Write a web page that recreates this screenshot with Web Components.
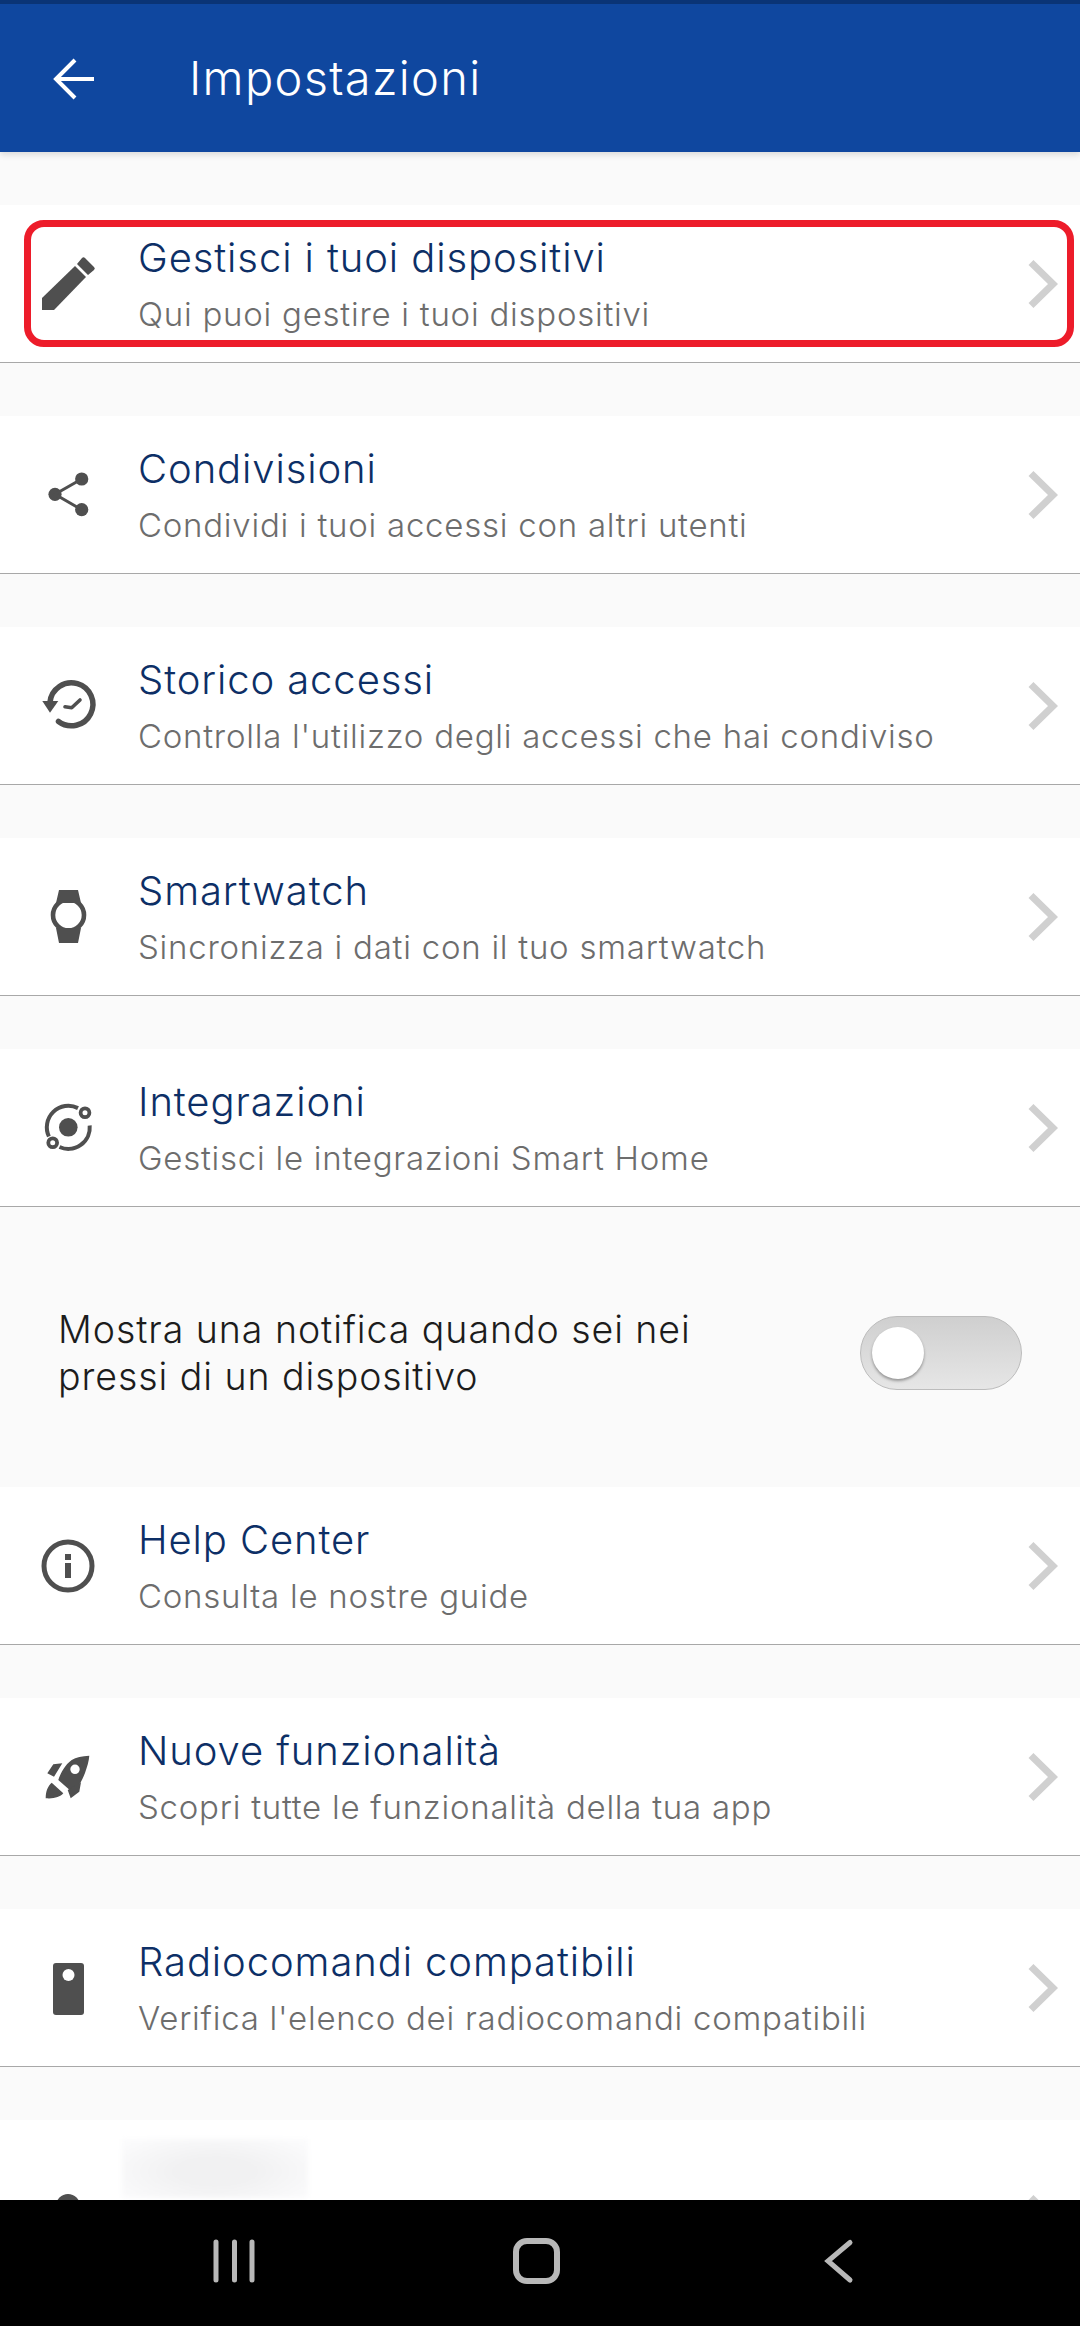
<!DOCTYPE html>
<html><head><meta charset="utf-8"><style>
html,body{margin:0;padding:0;height:100%}
body{font-family:"Inter","Liberation Sans",sans-serif;background:#fafafa}
app-shell{height:2326px}
</style></head><body>
<app-shell>
<app-header slot="top">Impostazioni</app-header>
<set-row t="Gestisci i tuoi dispositivi" s="Qui puoi gestire i tuoi dispositivi" i="edit" mark></set-row>
<set-row t="Condivisioni" s="Condividi i tuoi accessi con altri utenti" i="share"></set-row>
<set-row t="Storico accessi" s="Controlla l'utilizzo degli accessi che hai condiviso" i="history"></set-row>
<set-row t="Smartwatch" s="Sincronizza i dati con il tuo smartwatch" i="watch"></set-row>
<set-row t="Integrazioni" s="Gestisci le integrazioni Smart Home" i="orbit"></set-row>
<toggle-row>Mostra una notifica quando sei nei pressi di un dispositivo</toggle-row>
<set-row t="Help Center" s="Consulta le nostre guide" i="info"></set-row>
<set-row t="Nuove funzionalità" s="Scopri tutte le funzionalità della tua app" i="rocket"></set-row>
<set-row t="Radiocomandi compatibili" s="Verifica l'elenco dei radiocomandi compatibili" i="remote"></set-row>
<set-row blur i="user"></set-row>
<nav-bar slot="bottom"></nav-bar>
</app-shell>
<script>
const S='fill="none" stroke="#4f4f4f"';
const ICONS={
edit:'<path d="M10 50 43 18l11 11-32 33H10z"/><path d="M45 16l5-6a2 2 0 0 1 3 0l9 9a2 2 0 0 1 0 3l-6 5z"/>',
share:`<circle cx="49.7" cy="20" r="6.6"/><circle cx="23" cy="35.3" r="6.6"/><circle cx="49.7" cy="50.7" r="6.6"/><path d="M49.7 20 23 35.3 49.7 50.7" ${S} stroke-width="3"/>`,
history:`<path d="M26.500 51.500A21.500 21.500 0 1 0 18 32" ${S} stroke-width="5.500" stroke-linecap="round"/><path d="M10.300 31H26.300L18 42.700z"/><path d="M33 36.700l6.700 1L48 30" ${S} stroke-width="3.600" stroke-linecap="round" stroke-linejoin="round"/>`,
watch:`<circle cx="36.500" cy="34" r="15.500" ${S} stroke-width="4.600"/><path d="M27 9H46L49 22H24zM24 47H49L46 62H27z"/>`,
orbit:`<circle cx="36.300" cy="35.300" r="9.300"/><path d="M16.900 44.500A21.500 21.500 0 0 1 46 16.100" ${S} stroke-width="4"/><circle cx="53" cy="20.700" r="4.400" ${S} stroke-width="3.800"/><path d="M57.700 33.500A21.500 21.500 0 0 1 27.500 55" ${S} stroke-width="4"/><circle cx="20.700" cy="50.700" r="4.400" ${S} stroke-width="3.800"/>`,
info:`<circle cx="36" cy="36" r="24" ${S} stroke-width="5"/><rect x="33" y="33" width="6" height="15"/><rect x="33" y="24" width="6" height="6"/>`,
rocket:'<path fill-rule="evenodd" d="M57.300 14.700C50 15 44 16.500 39.700 19 33 24 29 31 26.300 39L39.700 50.700C46 47 50 40 53 32 55 26 57 20 57.300 14.700zM47.700 28.300a4.700 4.700 0 1 1-9.400 0 4.700 4.700 0 0 1 9.400 0z"/><path d="M15.300 32.300 21.300 23.300 30.300 22.300 22 35.700zM49 41.300 47.300 50.700 38.700 57.300 35.700 49zM13.700 57.300C13.700 50 16 45 19.700 41.700L31.300 52.300C28 56 22 58 13.700 57.300z"/>',
remote:'<rect x="21" y="11" width="31" height="52" rx="3"/><circle cx="36.500" cy="23" r="6" fill="#fff"/>',
user:'<circle cx="36" cy="23" r="12"/>'
};
class AppShell extends HTMLElement{constructor(){super();this.attachShadow({mode:'open'}).innerHTML=`<style>
:host{display:flex;flex-direction:column;width:1080px;overflow:hidden;background:#fafafa}
.top{flex:none;position:relative;z-index:1}
.body{flex:1;min-height:0;overflow:hidden;display:flex;flex-direction:column;padding-top:53px}
.bot{flex:none}
</style><div class="top"><slot name="top"></slot></div><div class="body"><slot></slot></div><div class="bot"><slot name="bottom"></slot></div>`}}
class AppHeader extends HTMLElement{constructor(){super();this.attachShadow({mode:'open'}).innerHTML=`<style>
:host{display:block;background:#0f479f;border-top:4px solid #0a3476;box-shadow:0 3px 6px rgba(0,0,0,.12)}
.b{height:148px;display:flex;align-items:center;padding-left:53px;box-sizing:border-box;color:#fff}
svg{width:42px;height:42px;flex:none;display:block;margin-top:1px}
.t{margin-left:94px;font:300 47px/1 "Inter",sans-serif;letter-spacing:1.3px;padding-bottom:2px}
</style><div class="b"><svg viewBox="0 0 42 42"><path d="M41 21H3M22 2 3 21l19 19" fill="none" stroke="#fff" stroke-width="4"/></svg><span class="t"><slot></slot></span></div>`}}
class SetRow extends HTMLElement{connectedCallback(){if(this.shadowRoot)return;
const blur=this.hasAttribute('blur');const r=this.attachShadow({mode:'open'});
r.innerHTML=`<style>
:host{display:block;flex:none;position:relative;background:#fff;height:158px;box-sizing:border-box;border-bottom:1.5px solid #a8a8a8;margin-bottom:53px}
:host([blur]){height:198px;border:0;margin:0}
.r{display:flex;height:100%;align-items:center;padding-left:32px;box-sizing:border-box}
.i{width:72px;height:72px;flex:none;fill:#4f4f4f;display:block}
.x{margin-left:34px;flex:1;min-width:0}
.t{font:350 40px/48px "Inter",sans-serif;letter-spacing:.9px;color:#0d2f66}
.s{font:350 33px/40px "Inter",sans-serif;letter-spacing:.75px;color:#6d6d6d;margin-top:12px;white-space:nowrap}
.c{width:34px;height:50px;flex:none;margin-right:19px;display:block}
.m{position:absolute;left:24px;top:15px;border:7px solid #ed1c2a;border-radius:20px;box-sizing:content-box;width:1036px;height:113px}
.b{position:absolute;left:122px;top:19px;width:186px;height:59px;background:radial-gradient(ellipse at 50% 55%,#f1f1f2 30%,#fbfbfc 90%);filter:blur(2px)}
</style><div class="r"><svg class="i" viewBox="0 0 72 72">${ICONS[this.getAttribute('i')]}</svg><div class="x">${blur?'':`<div class="t">${this.getAttribute('t')}</div><div class="s">${this.getAttribute('s')}</div>`}</div><svg class="c" viewBox="0 0 34 50"><path d="M4 3.500 26 25 4 46.500" fill="none" stroke="#d0d0d0" stroke-width="7"/></svg></div>${this.hasAttribute('mark')?'<div class="m"></div>':''}${blur?'<div class="b"></div>':''}`;
}}
class ToggleRow extends HTMLElement{constructor(){super();this.attachShadow({mode:'open'}).innerHTML=`<style>
:host{display:flex;flex:none;height:280px;box-sizing:border-box;align-items:center;justify-content:space-between;padding:12px 58px 0 58px;margin-top:-53px}
.l{width:680px;font:350 37.500px/47px "Inter",sans-serif;letter-spacing:.95px;color:#1c1c1c}
</style><div class="l"><slot></slot></div><app-switch></app-switch>`}}
class AppSwitch extends HTMLElement{constructor(){super();this.attachShadow({mode:'open'}).innerHTML=`<style>
:host{display:block;width:162px;height:74px;box-sizing:border-box;border:1px solid #bcbcbc;border-radius:37px;background:linear-gradient(#cfcfcf,#e6e6e6);padding:10px 11px}
.k{width:52px;height:52px;border-radius:50%;background:#fff;box-shadow:0 2px 3px rgba(0,0,0,.35)}
</style><div class="k"></div>`}}
class NavBar extends HTMLElement{constructor(){super();this.attachShadow({mode:'open'}).innerHTML=`<style>
:host{display:flex;background:#000;height:126px;box-sizing:border-box;padding:30px 0 0 0;align-items:flex-start}
svg{width:1080px;height:60px;display:block}
</style><svg viewBox="0 0 1080 60"><g fill="none" stroke="#b8b8b8" stroke-linecap="round"><path d="M216 12V50M234.500 12V50M252 12V50" stroke-width="5"/><rect x="516" y="11" width="41" height="40" rx="11" stroke-width="6"/><path d="M850 12.500 828 31 850 50" stroke-width="5"/></g></svg>`}}
[['app-shell',AppShell],['app-header',AppHeader],['set-row',SetRow],['toggle-row',ToggleRow],['app-switch',AppSwitch],['nav-bar',NavBar]].forEach(([n,c])=>customElements.define(n,c));
</script>
</body></html>
